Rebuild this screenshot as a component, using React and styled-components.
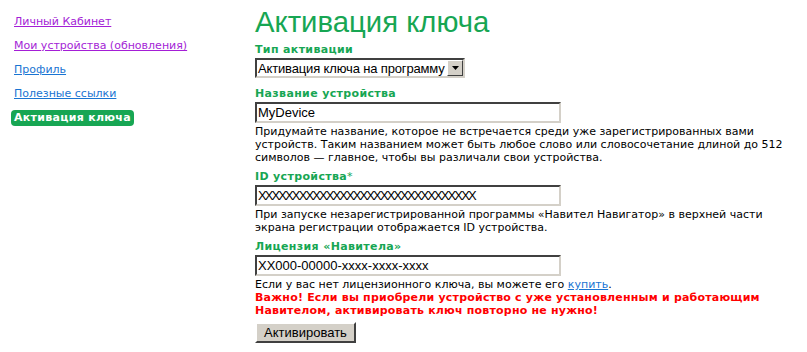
import React from "react";
import styled, { createGlobalStyle } from "styled-components";

const Global = createGlobalStyle`
  html, body { margin: 0; padding: 0; background: #fff; }
  body { font-family: "DejaVu Sans", Verdana, sans-serif; font-size: 11px; color: #000; }
`;

const Page = styled.div`
  display: flex;
  align-items: flex-start;
  width: 807px;
  height: 352px;
  overflow: hidden;
`;

const Nav = styled.nav`
  width: 244px;
  padding: 14px 0 0 11px;
  display: flex;
  flex-direction: column;
  align-items: flex-start;
  gap: 8px;
`;

const NavLink = styled.a`
  font-family: "DejaVu Sans", Verdana, sans-serif;
  font-size: 11px;
  line-height: 16px;
  padding-left: 3px;
  color: ${(p) => (p.$visited ? "#a41ed6" : "#1a74d2")};
  text-decoration: underline;
`;

const ActiveItem = styled.span`
  font-family: "DejaVu Sans", Verdana, sans-serif;
  font-weight: bold;
  font-size: 11px;
  line-height: 16px;
  color: #fff;
  background: #17a653;
  border-radius: 4px;
  padding: 0 3px;
  letter-spacing: 0.3px;
`;

const Main = styled.main`
  display: flex;
  flex-direction: column;
  align-items: flex-start;
  padding-top: 5px;
`;

const Title = styled.h1`
  margin: 0 0 4px 0;
  font-family: "Liberation Sans", Arial, sans-serif;
  font-weight: normal;
  font-size: 29.3px;
  line-height: 34px;
  color: #17a653;
`;

const Label = styled.div`
  font-weight: bold;
  font-size: 11px;
  line-height: 13px;
  letter-spacing: 0.35px;
  color: #17a653;
  margin-top: ${(p) => p.$mt || 0}px;
  margin-bottom: 2px;
`;

const Star = styled.span`
  font-weight: normal;
`;

const SelectBox = styled.div`
  display: flex;
  align-items: center;
  width: 210px;
  height: 20px;
  box-sizing: border-box;
  border: 2px solid;
  border-color: #404040 #d4d0c8 #d4d0c8 #404040;
  background: #fff;
`;

const SelectText = styled.span`
  flex: 1;
  overflow: hidden;
  white-space: nowrap;
  font-family: "Liberation Sans", Arial, sans-serif;
  font-size: 13px;
  letter-spacing: -0.15px;
  padding-left: 1px;
`;

const Arrow = styled.span`
  width: 16px;
  height: 16px;
  box-sizing: border-box;
  background: #d4d0c8;
  border: 1px solid;
  border-color: #fff #404040 #404040 #fff;
  display: flex;
  align-items: center;
  justify-content: center;
`;

const TextInput = styled.input`
  display: block;
  width: 306px;
  height: 21px;
  box-sizing: border-box;
  border: 2px solid;
  border-color: #404040 #d4d0c8 #d4d0c8 #404040;
  padding: 0 1px;
  font-family: "Liberation Sans", Arial, sans-serif;
  font-size: 13px;
  letter-spacing: ${(p) => (p.$tight ? "-1.9px" : "0")};
  color: #000;
  background: #fff;
  outline: none;
`;

const Hint = styled.p`
  margin: 2px 0 0 0;
  width: 540px;
  font-size: 11px;
  line-height: 13px;
`;

const Warning = styled.p`
  margin: 0;
  font-weight: bold;
  font-size: 11px;
  line-height: 13px;
  letter-spacing: 0.2px;
  color: #ff0000;
`;

const BuyLink = styled.a`
  color: #1a74d2;
  text-decoration: underline;
`;

const Button = styled.button`
  margin-top: 5px;
  width: 101px;
  height: 21px;
  box-sizing: border-box;
  background: #d4d0c8;
  border: 2px solid;
  border-color: #fff #404040 #404040 #fff;
  font-family: "Liberation Sans", Arial, sans-serif;
  font-size: 13px;
  color: #000;
  padding: 0;
`;

export default function App() {
  return (
    <>
      <Global />
      <Page>
        <Nav>
          <NavLink $visited href="#">Личный Кабинет</NavLink>
          <NavLink $visited href="#">Мои устройства (обновления)</NavLink>
          <NavLink href="#">Профиль</NavLink>
          <NavLink href="#">Полезные ссылки</NavLink>
          <ActiveItem>Активация ключа</ActiveItem>
        </Nav>
        <Main>
          <Title>Активация ключа</Title>
          <Label>Тип активации</Label>
          <SelectBox>
            <SelectText>Активация ключа на программу</SelectText>
            <Arrow>
              <svg width="7" height="4" viewBox="0 0 7 4">
                <path d="M0 0H7L3.5 4Z" fill="#000" />
              </svg>
            </Arrow>
          </SelectBox>
          <Label $mt={9}>Название устройства</Label>
          <TextInput defaultValue="MyDevice" />
          <Hint>
            Придумайте название, которое не встречается среди уже зарегистрированных вами
            устройств. Таким названием может быть любое слово или словосочетание длиной до 512
            символов — главное, чтобы вы различали свои устройства.
          </Hint>
          <Label $mt={6}>
            ID устройства<Star>*</Star>
          </Label>
          <TextInput $tight defaultValue="XXXXXXXXXXXXXXXXXXXXXXXXXXXXXXXX" />
          <Hint>
            При запуске незарегистрированной программы «Навител Навигатор» в верхней части
            экрана регистрации отображается ID устройства.
          </Hint>
          <Label $mt={6}>Лицензия «Навитела»</Label>
          <TextInput defaultValue="XX000-00000-xxxx-xxxx-xxxx" />
          <Hint>
            Если у вас нет лицензионного ключа, вы можете его <BuyLink href="#">купить</BuyLink>.
          </Hint>
          <Warning>
            Важно! Если вы приобрели устройство с уже установленным и работающим
            <br />
            Навителом, активировать ключ повторно не нужно!
          </Warning>
          <Button>Активировать</Button>
        </Main>
      </Page>
    </>
  );
}
